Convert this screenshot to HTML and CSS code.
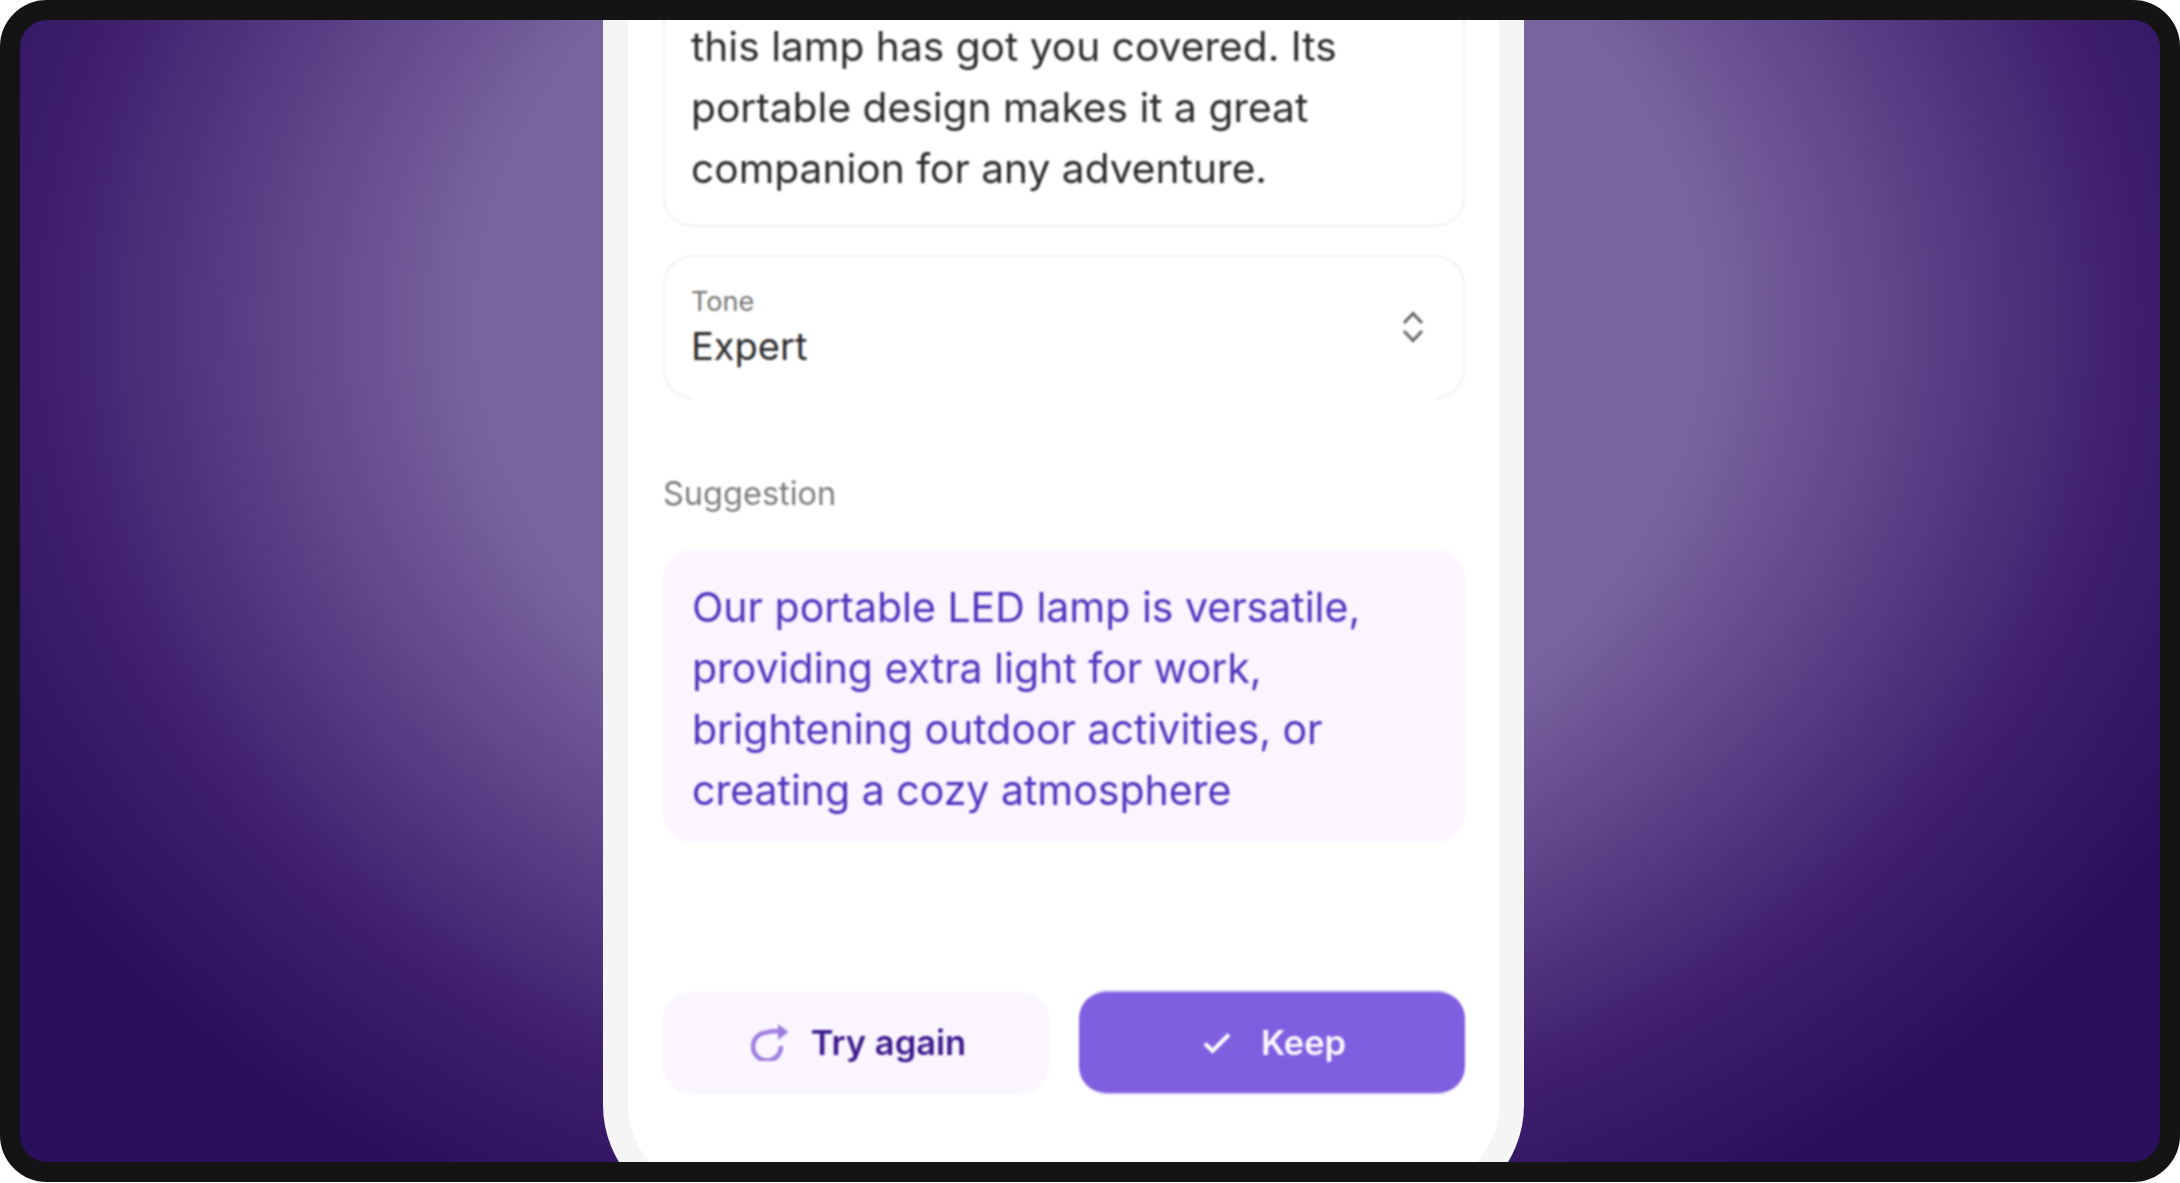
FILE: index.html
```html
<!DOCTYPE html>
<html lang="en">
<head>
<meta charset="utf-8">
<title>Suggestion</title>
<link rel="stylesheet" href="styles.css">
</head>
<body>
<main class="frame">
  <section class="phone">
    <div class="content">
      <div class="card source">
        <p>this lamp has got you covered. Its portable design makes it a great companion for any adventure.</p>
      </div>
      <div class="card select">
        <div class="select-text">
          <span class="select-label">Tone</span>
          <span class="select-value">Expert</span>
        </div>
        <svg class="chevrons" viewBox="0 0 22 32" aria-hidden="true">
          <path d="M2 12 11 2.5 20 12M2 20 11 29.5 20 20"/>
        </svg>
      </div>
      <h2 class="section-label">Suggestion</h2>
      <div class="suggestion">Our portable LED lamp is versatile, providing extra light for work, brightening outdoor activities, or creating a cozy atmosphere</div>
      <div class="actions">
        <button class="btn btn-soft" type="button">
          <svg class="icon-retry" viewBox="0 0 38 37" aria-hidden="true">
            <path class="retry-arc" d="M30 22A14 14 0 1 1 16 8.5C20 6.5 24 7.5 29 7.5"/>
            <path class="retry-head" d="M27 0 37.500 8 27 16z"/>
          </svg>
          Try again
        </button>
        <button class="btn btn-primary" type="button">
          <svg class="icon-check" viewBox="0 0 28 22" aria-hidden="true">
            <path d="M2 11.5 9.5 19 26 2.500"/>
          </svg>
          Keep
        </button>
      </div>
    </div>
  </section>
</main>
</body>
</html>
```
FILE: styles.css
```css
* { box-sizing: border-box; }
html, body { margin: 0; height: 100%; background: #fff; overflow: hidden; }
.frame {
  height: 1182px;
  border: 20px solid #141414;
  border-radius: 47px;
  overflow: hidden;
  display: flex;
  align-items: flex-end;
  padding-left: 583px;
  background:
    radial-gradient(ellipse 1180px 950px at 1070px 300px, #7a64a0 0, #7a64a0 52%, #3f1f6e 88%, #2a105c 106%);
  font-family: Inter, "Liberation Sans", sans-serif;
}
.phone {
  flex: none;
  width: 921px;
  margin-bottom: -53px;
  background: #fff;
  border: 25.5px solid #f5f5f5;
  border-top-width: 0;
  border-radius: 0 0 110px 110px;
  padding: 0 34px 95px 35px;
}
.content { filter: blur(0.85px); }
.card {
  border: 2px solid #f1f1f1;
  border-radius: 30px;
  background: #fff;
}
.source {
  border-top: 0;
  border-top-left-radius: 0;
  border-top-right-radius: 0;
  padding: 120px 26px 26px;
}
.source p {
  margin: 0;
  font-size: 40.7px;
  line-height: 61px;
  color: #2b2b2b;
}
.select {
  position: relative;
  margin-top: 28px;
  height: 144px;
  padding: 0 26px;
  display: flex;
  align-items: center;
  justify-content: space-between;
}
.select::after {
  content: "";
  position: absolute;
  left: 28px;
  right: 28px;
  bottom: -2px;
  height: 2px;
  background: #fff;
}
.select-text { display: flex; flex-direction: column; padding-top: 6px; }
.select-label { font-size: 27px; line-height: 30px; color: #757575; margin-top: -4px; }
.select-value { font-size: 38px; line-height: 48px; color: #2b2b2b; margin-top: 5px; }
.chevrons { width: 22px; height: 32px; margin-right: 13px; }
.chevrons path { fill: none; stroke: #666; stroke-width: 3; }
.section-label {
  margin: 80px 0 40px;
  font-size: 32.5px;
  line-height: 30px;
  font-weight: 400;
  color: #7c7c7c;
}
.suggestion {
  min-height: 294px;
  padding: 27.5px 20px 20px 29px;
  border-radius: 30px;
  background: #faf5ff;
  color: #5033bd;
  font-size: 41px;
  line-height: 61px;
}
.actions {
  margin-top: 147px;
  display: grid;
  grid-template-columns: 386px 386px;
  justify-content: space-between;
  align-items: center;
}
.btn {
  display: flex;
  align-items: center;
  justify-content: center;
  border: 0;
  border-radius: 28px;
  font: 600 34.5px/44px Inter, "Liberation Sans", sans-serif;
}
.btn-soft {
  height: 102px;
  gap: 22px;
  padding-left: 11px;
  background: #faf5ff;
  color: #3e1a8c;
}
.btn-primary {
  height: 105px;
  gap: 30px;
  padding-left: 11px;
  background: #805ee0;
  border-top: 2px solid #d9cef7;
  border-bottom: 2px solid #e6dffa;
  color: #fbf9ff;
}
.icon-retry { width: 38px; height: 37px; }
.retry-arc { fill: none; stroke: #a07ee0; stroke-width: 4.5; }
.retry-head { fill: #a07ee0; }
.icon-check { width: 28px; height: 22px; }
.icon-check path { fill: none; stroke: #fff; stroke-width: 4; }
```
